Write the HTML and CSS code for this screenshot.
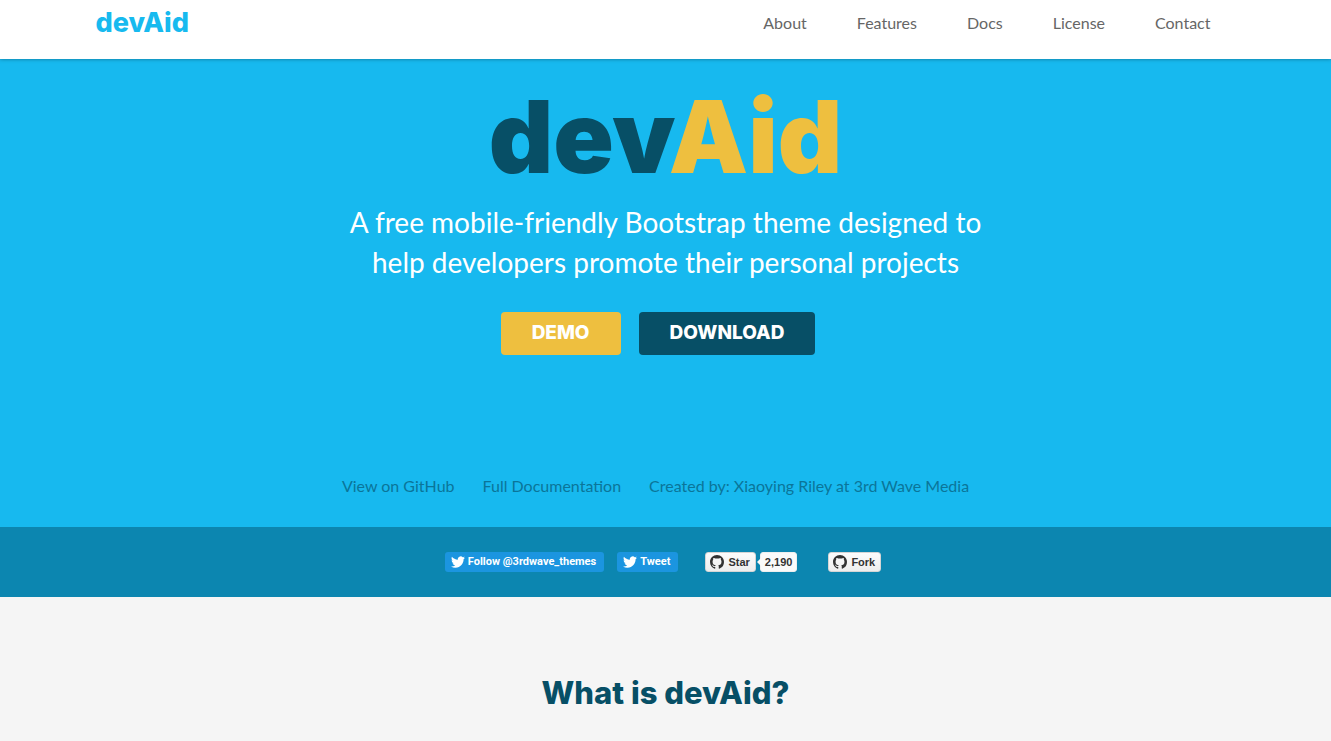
FILE: index.html
```html
<!DOCTYPE html>
<html lang="en">
<head>
<meta charset="utf-8">
<meta name="viewport" content="width=device-width, initial-scale=1">
<title>devAid</title>
<link rel="stylesheet" href="styles.css">
</head>
<body>
<svg class="sprite" aria-hidden="true">
  <symbol id="bird" viewBox="0 0 24 24"><path d="M23.954 4.569a10 10 0 0 1-2.825.775 4.958 4.958 0 0 0 2.163-2.723c-.951.555-2.005.959-3.127 1.184a4.92 4.92 0 0 0-8.384 4.482C7.691 8.094 4.066 6.13 1.64 3.161a4.822 4.822 0 0 0-.666 2.475c0 1.71.87 3.213 2.188 4.096a4.904 4.904 0 0 1-2.228-.616v.061a4.923 4.923 0 0 0 3.946 4.827 4.996 4.996 0 0 1-2.212.085 4.937 4.937 0 0 0 4.604 3.417 9.868 9.868 0 0 1-6.102 2.105c-.39 0-.779-.023-1.17-.067a13.995 13.995 0 0 0 7.557 2.209c9.054 0 13.999-7.496 13.999-13.986 0-.209 0-.42-.015-.63a9.936 9.936 0 0 0 2.46-2.548z"/></symbol>
  <symbol id="github" viewBox="0 0 16 16"><path d="M8 0C3.58 0 0 3.58 0 8c0 3.54 2.29 6.53 5.47 7.59.4.07.55-.17.55-.38 0-.19-.01-.82-.01-1.49-2.01.37-2.53-.49-2.69-.94-.09-.23-.48-.94-.82-1.13-.28-.15-.68-.52-.01-.53.63-.01 1.08.58 1.23.82.72 1.21 1.87.87 2.33.66.07-.52.28-.87.51-1.07-1.78-.2-3.64-.89-3.64-3.95 0-.87.31-1.59.82-2.15-.08-.2-.36-1.02.08-2.12 0 0 .67-.21 2.2.82.64-.18 1.32-.27 2-.27s1.36.09 2 .27c1.53-1.04 2.2-.82 2.2-.82.44 1.1.16 1.92.08 2.12.51.56.82 1.27.82 2.15 0 3.07-1.87 3.75-3.65 3.95.29.25.54.73.54 1.48 0 1.07-.01 1.93-.01 2.2 0 .21.15.46.55.38A8.01 8.01 0 0 0 16 8c0-4.42-3.58-8-8-8z"/></symbol>
</svg>
<header class="header">
  <div class="container header-row">
    <a class="logo" href="#">devAid</a>
    <nav class="nav">
      <a href="#about">About</a>
      <a href="#features">Features</a>
      <a href="#docs">Docs</a>
      <a href="#license">License</a>
      <a href="#contact">Contact</a>
    </nav>
  </div>
</header>
<main>
  <section class="promo">
    <h1 class="title">dev<span class="highlight">Aid</span></h1>
    <p class="intro">A free mobile-friendly Bootstrap theme designed to help developers promote their personal projects</p>
    <div class="actions">
      <a class="btn btn-demo" href="#demo">DEMO</a>
      <a class="btn btn-download" href="#download">DOWNLOAD</a>
    </div>
    <div class="meta">
      <a href="#github">View on GitHub</a>
      <a href="#documentation">Full Documentation</a>
      <a href="#author">Created by: Xiaoying Riley at 3rd Wave Media</a>
    </div>
  </section>
  <section class="social">
    <div class="tweets">
      <a class="tweet" href="#follow"><svg class="bird" aria-hidden="true"><use href="#bird"/></svg>Follow @3rdwave_themes</a>
      <a class="tweet" href="#tweet"><svg class="bird" aria-hidden="true"><use href="#bird"/></svg>Tweet</a>
    </div>
    <div class="repo">
      <div class="star">
        <a class="gh" href="#star"><svg class="octocat" aria-hidden="true"><use href="#github"/></svg>Star</a>
        <a class="count" href="#stargazers">2,190</a>
      </div>
      <a class="gh" href="#fork"><svg class="octocat" aria-hidden="true"><use href="#github"/></svg>Fork</a>
    </div>
  </section>
  <section class="about" id="about">
    <h2 class="about-title">What is devAid?</h2>
  </section>
</main>
</body>
</html>
```
FILE: styles.css
```css
* {
  box-sizing: border-box;
}
body {
  margin: 0;
  background: #f5f5f5;
  color: #444;
  font-family: Lato, sans-serif;
  font-size: 16px;
}
a {
  text-decoration: none;
}
.sprite {
  display: none;
}
.container {
  max-width: 1170px;
  margin: 0 auto;
  padding: 0 15px;
}
.header {
  position: relative;
  background: #fff;
  padding: 8px 0 21px;
  box-shadow: 0 0 4px rgba(0, 0, 0, 0.4);
}
.header-row {
  display: flex;
  justify-content: space-between;
  align-items: center;
}
.logo {
  color: #17baef;
  font: 800 27px/30px Inter, sans-serif;
}
.nav {
  display: flex;
}
.nav a {
  padding: 0 25px;
  color: #666;
  font: 400 16px/30px Lato, sans-serif;
}
.promo {
  display: flex;
  flex-direction: column;
  align-items: center;
  padding: 23px 15px 29px;
  background: #17b9ef;
  text-align: center;
}
.title {
  margin: 0 0 10px;
  color: #074f66;
  font: 900 100px/110px Inter, sans-serif;
}
.highlight {
  color: #eebf3f;
}
.intro {
  max-width: 660px;
  margin: 0 0 30px;
  color: #fff;
  font-size: 28px;
  line-height: 40px;
}
.actions {
  display: flex;
  gap: 18px;
  margin-bottom: 118px;
  padding-right: 15px;
}
.btn {
  padding: 9px 31px 10px;
  border-radius: 4px;
  color: #fff;
  font: 800 19px/24px Inter, sans-serif;
}
.btn-demo {
  background: #eebf3f;
}
.btn-download {
  background: #074f66;
}
.meta {
  display: flex;
  gap: 28px;
  padding-right: 20px;
}
.meta a {
  color: #0b7599;
  line-height: 25px;
}
.social {
  display: flex;
  justify-content: center;
  gap: 27px;
  padding: 25px 5px 25px 0;
  background: #0c86b0;
  font: 700 11px/20px "Liberation Sans", Arial, sans-serif;
}
.tweets,
.repo,
.star {
  display: flex;
}
.tweets {
  gap: 13px;
  font-family: Roboto, sans-serif;
}
.repo {
  gap: 31px;
}
.star {
  gap: 4px;
}
.tweet {
  display: flex;
  align-items: center;
  gap: 3px;
  height: 20px;
  padding: 0 8px 0 6px;
  border-radius: 3px;
  background: #1b95e0;
  color: #fff;
}
.bird {
  width: 14px;
  height: 14px;
  fill: #fff;
}
.gh,
.count {
  display: flex;
  align-items: center;
  height: 20px;
  border: 1px solid #d5d5d5;
  border-radius: 3px;
  color: #333;
}
.gh {
  gap: 4px;
  padding: 0 5px 0 4px;
  background: linear-gradient(#fcfcfc, #eee);
}
.octocat {
  width: 14px;
  height: 14px;
  fill: #333;
}
.count {
  position: relative;
  padding: 0 4px;
  border-color: #eee;
  background: #fafafa;
}
.count::before {
  content: "";
  position: absolute;
  top: 5px;
  left: -4px;
  border: 4px solid transparent;
  border-left-width: 0;
  border-right-color: #fafafa;
}
.about {
  padding: 76px 15px 28px;
}
.about-title {
  margin: 0;
  color: #074f66;
  font: 800 31px/40px Inter, sans-serif;
  text-align: center;
}
```
